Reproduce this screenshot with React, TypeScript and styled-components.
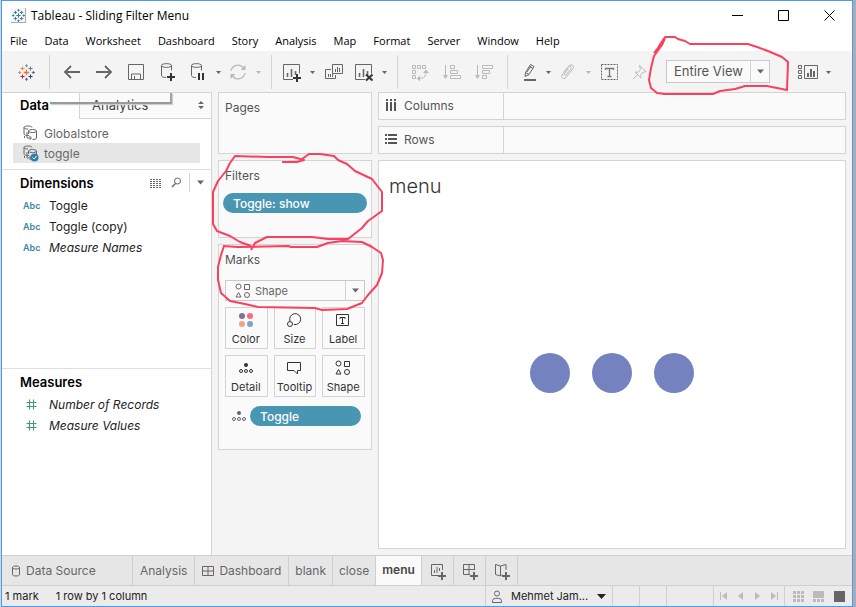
import React from "react";
import styled, { createGlobalStyle, css } from "styled-components";

const LINE = "#d4d4d4";
const UI = '"Open Sans", "Noto Sans", sans-serif';
const BODY = 'Inter, Roboto, "Liberation Sans", sans-serif';

const GlobalStyle = createGlobalStyle`
  *, *::before, *::after { box-sizing: border-box; }
  body { margin: 0; font-family: ${BODY}; font-size: 12px; color: #333; }
  button, select { font: inherit; color: inherit; background: none; border: 0; padding: 0; margin: 0; }
  h1, h2, ul, p { margin: 0; padding: 0; }
  ul { list-style: none; }
  svg { display: block; flex: none; }
`;

/* ---------- window frame ---------- */

const Desktop = styled.div`
  min-height: 100vh;
  display: flex;
  position: relative;
  padding: 0 3px 0 1px;
  background: linear-gradient(90deg, #d3d6da 0 50%, #a9adb3 50%);
`;

const AppWindow = styled.div`
  flex: 1;
  min-width: 0;
  display: flex;
  flex-direction: column;
  border: 1px solid #4a9bee;
  background: #f4f4f4;
`;

const TitleBar = styled.header`
  display: flex;
  align-items: center;
  height: 29px;
  padding-left: 9px;
  background: #fff;
  color: #000;
`;

const AppBadge = styled.span`
  display: grid;
  place-items: center;
  width: 15px;
  height: 15px;
  border-right: 1px solid #aaa;
  border-bottom: 1px solid #aaa;
  background: #f4f6f8;
`;

const WindowTitle = styled.h1`
  flex: 1;
  margin-left: 5px;
  font: 400 12px/16px ${UI};
`;

const WindowButton = styled.button`
  display: grid;
  place-items: center;
  width: 46px;
  height: 28px;
`;

const MenuBar = styled.nav`
  display: flex;
  align-items: center;
  gap: 17px;
  height: 21px;
  padding-left: 8px;
  background: #fff;
  color: #000;
`;

const MenuItem = styled.button`
  font: 400 11px/20px ${UI};
`;

/* ---------- toolbar ---------- */

const Toolbar = styled.div`
  display: flex;
  height: 41px;
  padding: 4px 0 0 2px;
`;

const Group = styled.div<{ $last?: boolean }>`
  display: flex;
  align-items: center;
  height: 34px;
  padding: 0 7px 0 6px;
  border-right: ${(p) => (p.$last ? "0" : `1px solid ${LINE}`)};
`;

const Tool = styled.button<{ $narrow?: boolean; $off?: boolean }>`
  display: grid;
  place-items: center;
  width: ${(p) => (p.$narrow ? 28 : 32)}px;
  height: 28px;
  color: ${(p) => (p.$off ? "#b9b9b9" : "#666")};
`;

const CaretTool = styled.button<{ $off?: boolean }>`
  display: grid;
  place-items: center;
  width: 12px;
  height: 28px;
  color: ${(p) => (p.$off ? "#b9b9b9" : "#666")};
`;

const SelectBox = styled.label<{ $wide?: boolean }>`
  display: grid;
  grid-template-columns: 1fr 19px;
  align-items: center;
  border: 1px solid #c9c9c9;
  background: #fafafa;
  color: ${(p) => (p.$wide ? "#666" : "#555")};
  ${(p) =>
    p.$wide
      ? css`height: 21px; font-size: 11px;`
      : css`width: 104px; height: 23px; margin: 0 24px 2px 12px; font-size: 13px;`}
`;

const SelectInput = styled.select<{ $indent: number }>`
  appearance: none;
  grid-area: 1 / 1 / 2 / 3;
  width: 100%;
  height: 19px;
  padding-left: ${(p) => p.$indent}px;
  outline: 0;
`;

const SelectGlyph = styled.span`
  grid-area: 1 / 1;
  padding-left: 9px;
  color: #666;
  pointer-events: none;
`;

const SelectArrow = styled.span`
  grid-area: 1 / 2;
  display: grid;
  place-items: center;
  height: 100%;
  border-left: 1px solid ${LINE};
  color: #666;
  pointer-events: none;
`;

/* ---------- work area ---------- */

const Work = styled.div`
  flex: 1;
  display: grid;
  grid-template-columns: 210px 154px minmax(0, 1fr);
`;

const DataPane = styled.aside`
  display: flex;
  flex-direction: column;
  position: relative;
  border: solid ${LINE};
  border-width: 1px 1px 0 0;
  background: #fff;
`;

const PaneTabs = styled.div`
  display: flex;
  height: 26px;
`;

const PaneTab = styled.button<{ $active?: boolean }>`
  display: flex;
  align-items: center;
  justify-content: space-between;
  text-align: left;
  font-size: 13px;
  line-height: 18px;
  ${(p) =>
    p.$active
      ? css`width: 77px; padding: 0 0 2px 18px; font-weight: 600; color: #000;`
      : css`
          flex: 1;
          padding: 0 7px 1px 12px;
          background: #fafafa;
          border: solid ${LINE};
          border-width: 0 0 1px 1px;
          color: #444;
        `}
`;

const PopupEdge = styled.div`
  position: absolute;
  top: 0;
  left: 48px;
  width: 122px;
  height: 11px;
  border-right: 2px solid #a2a2a2;
  border-bottom: 2px solid #9a9a9a;
  box-shadow: 1px 1px 1px #d0d0d0;
  pointer-events: none;
`;

const SourceList = styled.ul`
  padding: 4px 11px 6px;
  border-bottom: 1px solid #e0e0e0;
`;

const Source = styled.li<{ $active?: boolean }>`
  background: ${(p) => (p.$active ? "#e6e6e6" : "transparent")};
`;

const SourceButton = styled.button`
  display: flex;
  align-items: center;
  gap: 5px;
  width: 100%;
  height: 20px;
  padding-left: 9px;
  color: #666;
`;

const FieldSection = styled.section<{ $grow: number }>`
  flex: ${(p) => p.$grow} 0 0;
  & + & {
    border-top: 1px solid #e0e0e0;
  }
`;

const SectionHead = styled.div`
  display: flex;
  align-items: center;
  height: 25px;
  padding-left: 18px;
`;

const SectionTitle = styled.h2`
  flex: 1;
  font-size: 13px;
  line-height: 18px;
  font-weight: 600;
  color: #000;
`;

const HeadButton = styled.button<{ $edge?: boolean }>`
  display: grid;
  place-items: center;
  width: 20px;
  height: 19px;
  color: #666;
  ${(p) => p.$edge && css`width: 22px; margin-left: 3px; border-left: 1px solid ${LINE};`}
`;

const Field = styled.li<{ $italic?: boolean }>`
  display: flex;
  align-items: center;
  height: 21px;
  padding-left: 21px;
  font-style: ${(p) => (p.$italic ? "italic" : "normal")};
  color: #222;
`;

const FieldType = styled.span<{ $measure?: boolean }>`
  display: flex;
  width: 26px;
  padding-left: ${(p) => (p.$measure ? 3 : 0)}px;
  font-size: 9px;
  font-weight: 600;
  font-style: normal;
  color: ${(p) => (p.$measure ? "#3a9c7d" : "#3f87a3")};
`;

const CardColumn = styled.div`
  display: flex;
  flex-direction: column;
  gap: 6px;
  width: 154px;
  margin-left: 6px;
`;

const Card = styled.section<{ $min: number }>`
  min-height: ${(p) => p.$min}px;
  padding: 6px 4px;
  border: 1px solid ${LINE};
  background: #fafafa;
`;

const CardTitle = styled.h2`
  padding-left: 2px;
  font-size: 12px;
  line-height: 18px;
  font-weight: 400;
  color: #555;
`;

const Pill = styled.button<{ $row?: boolean }>`
  height: 20px;
  padding-left: 10px;
  border-radius: 10px;
  background: #4996b2;
  color: #fff;
  font-size: 12px;
  font-weight: 500;
  text-align: left;
  ${(p) => (p.$row ? css`flex: 1;` : css`display: block; width: 100%; margin-top: 8px;`)}
`;

const MarksBody = styled.div`
  display: grid;
  gap: 6px;
  padding: 11px 2px 0;
`;

const MarkGrid = styled.div`
  display: grid;
  grid-template-columns: repeat(3, minmax(0, 1fr));
  gap: 6px;
`;

const MarkButton = styled.button`
  display: flex;
  flex-direction: column;
  align-items: center;
  justify-content: space-between;
  height: 42px;
  padding: 4px 1px 1px 0;
  border: 1px solid ${LINE};
  font-size: 11px;
  line-height: 15px;
  color: #333;
`;

const MarkRow = styled.div`
  display: flex;
  align-items: center;
  gap: 3px;
  margin-top: 3px;
  padding: 0 4px 0 6px;
  color: #666;
`;

const Sheet = styled.main`
  display: flex;
  flex-direction: column;
  gap: 6px;
  padding: 0 6px 6px 12px;
`;

const Shelf = styled.div`
  display: flex;
  height: 28px;
  border: 1px solid ${LINE};
  background: #fafafa;
`;

const ShelfLabel = styled.div`
  display: flex;
  align-items: center;
  gap: 7px;
  width: 125px;
  padding: 0 0 2px 6px;
  border-right: 1px solid ${LINE};
  color: #555;
`;

const Viz = styled.section`
  flex: 1;
  display: flex;
  flex-direction: column;
  border: 1px solid ${LINE};
  background: #fff;
`;

const VizTitle = styled.h2`
  height: 36px;
  padding: 13px 10px 0;
  font-size: 20px;
  line-height: 24px;
  font-weight: 300;
  color: #333;
`;

const Dots = styled.div`
  flex: 1;
  display: flex;
  align-items: center;
  justify-content: center;
  gap: 22px;
`;

const Dot = styled.span`
  width: 40px;
  height: 40px;
  border-radius: 50%;
  background: #7483bf;
`;

/* ---------- bottom bars ---------- */

const SheetTabs = styled.nav`
  display: flex;
  height: 31px;
  border: solid #cfcfcf;
  border-width: 1px 0;
  background: #e6e6e6;
`;

const SheetTab = styled.button<{ $kind?: "source" | "roomy" | "active" | "add" }>`
  display: flex;
  align-items: center;
  gap: 5px;
  padding: 0 6px;
  border-right: 1px solid #cfcfcf;
  color: #666;
  ${(p) => p.$kind === "source" && css`width: 131px; padding-left: 9px;`}
  ${(p) => p.$kind === "roomy" && css`padding: 0 7px;`}
  ${(p) => p.$kind === "active" && css`background: #fafafa; color: #444; font-weight: 600; padding-bottom: 2px;`}
  ${(p) => p.$kind === "add" && css`width: 32px; padding: 0 0 0 8px;`}
`;

const StatusBar = styled.footer`
  display: flex;
  height: 20px;
  background: #ebebeb;
  font-size: 11px;
  color: #222;
`;

const StatusText = styled.div`
  flex: 1;
  display: flex;
  align-items: center;
  gap: 17px;
  padding-left: 3px;
`;

const StatusCell = styled.div<{ $w: number }>`
  display: flex;
  align-items: center;
  justify-content: space-evenly;
  width: ${(p) => p.$w}px;
  border-left: 1px solid #cfcfcf;
  color: #bbb;
`;

const UserButton = styled.button`
  display: flex;
  align-items: center;
  gap: 8px;
  width: 127px;
  padding: 0 6px 0 5px;
  border-left: 1px solid #cfcfcf;
`;

const UserGlyph = styled.span`
  color: #666;
`;

const UserName = styled.span`
  flex: 1;
  text-align: left;
  white-space: nowrap;
`;

const Nav = styled.button`
  display: grid;
  place-items: center;
  width: 15px;
  height: 18px;
`;

const Ink = styled.svg`
  position: absolute;
  top: 0;
  left: 0;
  pointer-events: none;
`;

/* ---------- icons ---------- */

type IconProps = { w?: number; h?: number; children: React.ReactNode };
const Icon = ({ w = 20, h = 20, children }: IconProps) => (
  <svg width={w} height={h} viewBox={`0 0 ${w} ${h}`} fill="none" stroke="currentColor" aria-hidden="true">
    {children}
  </svg>
);

const Caret = ({ big }: { big?: boolean }) => (
  <Icon w={9} h={5}>
    <path d={big ? "M0 0h9L4.500 5z" : "M2 1h5L4.500 4z"} fill="currentColor" stroke="none" />
  </Icon>
);

const SelectCaret = () => (
  <Icon w={9} h={5}>
    <path d="M1 0.500h7L4.500 4.500z" fill="currentColor" stroke="none" />
  </Icon>
);

const plus = (x: number, y: number, r: number) => `M${x - r} ${y}h${2 * r}M${x} ${y - r}v${2 * r}`;

const TableauLogo = ({ mono }: { mono?: boolean }) => {
  const c = (v: string) => (mono ? "#3b7c9e" : v);
  const s = mono ? 13 : 17;
  return (
    <svg width={s} height={s} viewBox="0 0 17 17" fill="none" strokeWidth={mono ? 1.3 : 1.1} aria-hidden="true">
      <path d={plus(8.5, 8.5, 2.8)} stroke={c("#e8762d")} strokeWidth="1.400" />
      <path d={plus(4.5, 4.5, 2.1)} stroke={c("#eb912c")} />
      <path d={plus(12.5, 4.5, 2.1)} stroke={c("#59879b")} />
      <path d={plus(4.5, 12.5, 2.1)} stroke={c("#c72037")} />
      <path d={plus(12.5, 12.5, 2.1)} stroke={c("#1f447e")} />
      <path d={plus(8.5, 1.7, 1.5)} stroke={c("#7199a6")} />
      <path d={plus(8.5, 15.3, 1.5)} stroke={c("#5c6692")} />
      <path d={plus(1.7, 8.5, 1.5)} stroke={c("#c98a86")} />
      <path d={plus(15.3, 8.5, 1.5)} stroke={c("#5c6692")} />
    </svg>
  );
};

const Cylinder = "M3.500 3.500c0-2.500 10-2.500 10 0s-10 2.500-10 0v10";
const AddSource = () => (
  <Icon>
    <path d={`${Cylinder}c0 1.500 2 2 4.500 2M13.500 3.500v5`} />
    <path d="M9 15h8M13 11v8" stroke="#333" strokeWidth="2" />
  </Icon>
);
const PauseSource = () => (
  <Icon>
    <path d={`${Cylinder}c0 1.500 2 2 4.500 2M13.500 3.500v5`} />
    <path d="M11 11v7M15 11v7" stroke="#333" strokeWidth="2" />
  </Icon>
);
const Arrow = ({ right }: { right?: boolean }) => (
  <Icon>
    <path d={right ? "M2 10h15M11 4l6 6-6 6" : "M18 10H3M9 4l-6 6 6 6"} strokeWidth="1.800" />
  </Icon>
);
const Save = () => (
  <Icon>
    <path d="M2.500 2.500h15v15h-15zM5.500 17v-5h9v5M8.500 17v-3" />
  </Icon>
);
const Refresh = () => (
  <Icon>
    <path d="M3 9a7 7 0 0 1 12.500-3M17 11a7 7 0 0 1-12.500 3" strokeWidth="1.300" />
    <path d="M17.500 3v5h-5zM2.500 17v-5h5z" fill="currentColor" stroke="none" />
  </Icon>
);
const SheetIcon = ({ mark }: { mark: "plus" | "cross" }) => (
  <Icon>
    <path d="M11 17.500H1.500v-15h16v9" />
    <path d="M5.500 11v4M9.500 7v8M13.500 9v4" strokeWidth="1.600" />
    <path d={mark === "plus" ? "M11 16h8M15 12v8" : "M12 12.500l6.500 6M18.500 12.500l-6.500 6"} stroke="#333" strokeWidth="2" />
  </Icon>
);
const Duplicate = () => (
  <Icon>
    <path d="M8.500 2.500h10v9h-10zM7 7.500H1.500v9h10V13M11.500 7v3M13.500 5v5M15.500 6v4M4.500 12v3M6.500 12v3M8.500 12v3" />
  </Icon>
);
const Swap = () => (
  <Icon>
    <path d="M2.500 3.500h3v3h-3zM7.500 3.500h3v3h-3zM12.500 3.500h3v3h-3zM2.500 8.500h3v3h-3zM2.500 13.500h3v3h-3zM9 16.500c5 0 7-2 7-7" />
    <path d="M13 11l3-3.500 3 3.500zM10 13.500v6L7 16.500z" fill="currentColor" stroke="none" />
  </Icon>
);
const Sort = ({ desc }: { desc?: boolean }) => (
  <Icon>
    <path d="M3.500 3v11" />
    <path d="M1 13h5l-2.500 4z" fill="currentColor" stroke="none" />
    <path
      d={desc ? "M8.500 3.500h10v3h-10zM8.500 8.500h7v3h-7zM8.500 13.500h4v3h-4z" : "M8.500 3.500h4v3h-4zM8.500 8.500h7v3h-7zM8.500 13.500h10v3h-10z"}
    />
  </Icon>
);
const Pen = () => (
  <Icon>
    <path d="M7.500 10.500l5-8 3.500 2-5 8-4 2zM7.500 10.500l3.500 2M11.500 4.500l3.500 2M9 10l4-6" />
    <path d="M6 18h12" strokeWidth="2" />
  </Icon>
);
const Clip = () => (
  <Icon>
    <path d="M6 10l5-6c2-2.500 6-.5 4 2.500l-7 9c-2 2.500-5.500.5-4-2.500l6-8c1.500-2 4-.5 3 1.500l-5 6.500c-1 1-2.500 0-1.500-1.500l4-5" />
  </Icon>
);
const TextTool = () => (
  <Icon>
    <rect x="1.500" y="2.500" width="16" height="15" strokeDasharray="2 1" />
    <path d="M5.500 8V6.500h8V8M9.500 6.500v8M7.500 14.500h4" stroke="#777" strokeWidth="1.300" />
  </Icon>
);
const Pin = () => (
  <Icon>
    <path d="M9.500 3.500l6.500 6-1.500.5-2 .5-2 3 .5 2.500L5 10l3 .3 2.500-2.800zM7.500 13L3 17" />
  </Icon>
);
const ShowMe = () => (
  <Icon w={22} h={16}>
    <path d="M1.500 1.500h3v3h-3zM1.500 6.500h3v3h-3zM1.500 11.500h3v3h-3zM7.500 1.500h13v13h-13z" />
    <path d="M11 9v4M14 5v8M17 7v6" strokeWidth="2" />
  </Icon>
);
const SourceIcon = ({ checked }: { checked?: boolean }) => (
  <Icon w={17} h={18}>
    <path d="M7 11.500c-3 0-5-.5-5-1.500V3.500c0-2 8-2 8 0M2 3.500c0 1 2 1.500 4 1.500M2.500 12v2M5 8v6h4M7.500 12l2 2-2 2" />
    <path d="M6.500 7c0-2 8-2 8 0s-8 2-8 0v3M14.500 7v7c0 1-2 1.500-4 1.500" />
    {checked && (
      <>
        <circle cx="12.500" cy="13.500" r="4" fill="#2f7fa5" stroke="none" />
        <path d="M10.500 13.500l1.500 1.500 2.500-3" stroke="#fff" />
      </>
    )}
  </Icon>
);
const ShapeIcon = () => (
  <Icon w={16} h={16}>
    <circle cx="3.500" cy="3.500" r="2.500" />
    <path d="M9.500 1.500h5v5h-5zM3.500 9.500L1 14h5z" />
    <circle cx="12" cy="12" r="2.500" />
  </Icon>
);
const DetailIcon = () => (
  <Icon w={16} h={16}>
    <circle cx="8" cy="5" r="2" fill="currentColor" stroke="none" />
    <circle cx="3" cy="11" r="1.500" />
    <circle cx="8" cy="11" r="1.500" />
    <circle cx="13" cy="11" r="1.500" />
  </Icon>
);
const markIcons: Record<string, React.ReactNode> = {
  Color: (
    <svg width="16" height="16" viewBox="0 0 16 16" aria-hidden="true">
      <circle cx="4" cy="4" r="3" fill="#83709b" />
      <circle cx="12" cy="4" r="3" fill="#f96d7e" />
      <circle cx="4" cy="12" r="3" fill="#f0a57a" />
      <circle cx="12" cy="12" r="3" fill="#7ea3cb" />
    </svg>
  ),
  Size: (
    <Icon w={16} h={16}>
      <path d="M4 9a5.500 5.500 0 1 1 4 3.500" />
      <circle cx="4" cy="12" r="2.500" />
    </Icon>
  ),
  Label: (
    <Icon w={16} h={16}>
      <path d="M1.500 2.500h12v11h-12zM5 7V5.500h5V7M7.500 5.500v6M6 11.500h3" />
    </Icon>
  ),
  Detail: <DetailIcon />,
  Tooltip: (
    <Icon w={16} h={16}>
      <path d="M1.500 2.500h13v8h-3v3.500L8 10.500H1.500z" />
    </Icon>
  ),
  Shape: <ShapeIcon />,
};
const Hash = () => (
  <Icon w={11} h={11}>
    <path d="M3.500 0.500v10M7.500 0.500v10M0.500 3.500h10M0.500 7.500h10" />
  </Icon>
);
const AddTab = ({ d }: { d: string }) => (
  <Icon w={18} h={18}>
    <path d={d} />
    <path d="M8 14h8M12 10v8" strokeWidth="2" />
  </Icon>
);

const menus = ["File", "Data", "Worksheet", "Dashboard", "Story", "Analysis", "Map", "Format", "Server", "Window", "Help"];

const inkPaths = [
  "M665 38L662 45 654 56 651 68 649 80 651 88 657 93 665 94H713L720 91 735 89 745 86H767L787 90 788 62 782 57 768 51 757 47 748 44H690L685 41 678 39 675 37H665L659 46 661 44 654 53",
  "M282 162H297L304 160 293 157 268 157 235 156 230 163 226 171 218 181 213 192V224L217 231 230 236 240 242 251 246M251 250L255 243 267 237H312L328 239 348 239 362 228 368 221 382 211V192L372 179 355 171 347 164 338 160 334 156 320 154H309L302 159",
  "M223 246L238 247 288 246 291 247 317 247 328 243 342 241 362 242 372 247 381 253 383 260 382 273 377 285 368 295 362 303 347 309 322 310 315 308 258 307 245 304 230 301 221 293 218 280 218 267 221 255 224 246",
];

export default function App() {
  return (
    <Desktop>
      <GlobalStyle />
      <AppWindow>
        <TitleBar>
          <AppBadge><TableauLogo mono /></AppBadge>
          <WindowTitle>Tableau - Sliding Filter Menu</WindowTitle>
          <WindowButton aria-label="Minimize"><Icon w={11} h={11}><path d="M0 5.500h11" /></Icon></WindowButton>
          <WindowButton aria-label="Maximize"><Icon w={11} h={11}><path d="M.5.5h10v10H.5z" /></Icon></WindowButton>
          <WindowButton aria-label="Close"><Icon w={11} h={11}><path d="M.5.5l10 10M10.500.5l-10 10" /></Icon></WindowButton>
        </TitleBar>
        <MenuBar>{menus.map((m) => <MenuItem key={m}>{m}</MenuItem>)}</MenuBar>

        <Toolbar>
          <Group><Tool aria-label="Start page"><TableauLogo /></Tool></Group>
          <Group>
            <Tool aria-label="Undo"><Arrow /></Tool>
            <Tool aria-label="Redo"><Arrow right /></Tool>
            <Tool aria-label="Save"><Save /></Tool>
            <Tool aria-label="New data source"><AddSource /></Tool>
            <Tool $narrow aria-label="Pause updates"><PauseSource /></Tool>
            <CaretTool aria-label="Pause options"><Caret /></CaretTool>
            <Tool $narrow $off aria-label="Run update"><Refresh /></Tool>
            <CaretTool $off aria-label="Update options"><Caret /></CaretTool>
          </Group>
          <Group>
            <Tool $narrow aria-label="New worksheet"><SheetIcon mark="plus" /></Tool>
            <CaretTool aria-label="New sheet options"><Caret /></CaretTool>
            <Tool aria-label="Duplicate"><Duplicate /></Tool>
            <Tool $narrow aria-label="Clear sheet"><SheetIcon mark="cross" /></Tool>
            <CaretTool aria-label="Clear options"><Caret /></CaretTool>
          </Group>
          <Group>
            <Tool $off aria-label="Swap rows and columns"><Swap /></Tool>
            <Tool $off aria-label="Sort ascending"><Sort /></Tool>
            <Tool $off aria-label="Sort descending"><Sort desc /></Tool>
          </Group>
          <Group $last>
            <Tool $narrow aria-label="Highlight"><Pen /></Tool>
            <CaretTool aria-label="Highlight options"><Caret /></CaretTool>
            <Tool $narrow $off aria-label="Group members"><Clip /></Tool>
            <CaretTool $off aria-label="Group options"><Caret /></CaretTool>
            <Tool aria-label="Show mark labels"><TextTool /></Tool>
            <Tool $narrow $off aria-label="Fix axes"><Pin /></Tool>
            <SelectBox>
              <SelectInput $indent={7} aria-label="Fit" defaultValue="Entire View">
                <option>Entire View</option>
              </SelectInput>
              <SelectArrow><SelectCaret /></SelectArrow>
            </SelectBox>
            <Tool $narrow aria-label="Show Me"><ShowMe /></Tool>
            <CaretTool aria-label="Show Me options"><Caret /></CaretTool>
          </Group>
        </Toolbar>

        <Work>
          <DataPane>
            <PaneTabs>
              <PaneTab $active>Data</PaneTab>
              <PaneTab>
                Analytics
                <Icon w={6} h={8}><path d="M0 3h6L3 0zM0 5h6L3 8z" fill="#666" stroke="none" /></Icon>
              </PaneTab>
            </PaneTabs>
            <PopupEdge />
            <SourceList>
              <Source><SourceButton><SourceIcon />Globalstore</SourceButton></Source>
              <Source $active><SourceButton><SourceIcon checked />toggle</SourceButton></Source>
            </SourceList>
            <FieldSection $grow={199}>
              <SectionHead>
                <SectionTitle>Dimensions</SectionTitle>
                <HeadButton aria-label="View data">
                  <Icon w={12} h={10}><path d="M0 1.500h12M0 3.500h12M0 5.500h12M0 7.500h12M0 9.500h12" strokeDasharray="2 1" /></Icon>
                </HeadButton>
                <HeadButton aria-label="Find field">
                  <Icon w={11} h={11}><circle cx="6.500" cy="4" r="3" /><path d="M4.500 6.500L1 10" strokeWidth="1.500" /></Icon>
                </HeadButton>
                <HeadButton $edge aria-label="Pane menu"><SelectCaret /></HeadButton>
              </SectionHead>
              <ul>
                <Field><FieldType>Abc</FieldType>Toggle</Field>
                <Field><FieldType>Abc</FieldType>Toggle (copy)</Field>
                <Field $italic><FieldType>Abc</FieldType>Measure Names</Field>
              </ul>
            </FieldSection>
            <FieldSection $grow={186}>
              <SectionHead><SectionTitle>Measures</SectionTitle></SectionHead>
              <ul>
                <Field $italic><FieldType $measure><Hash /></FieldType>Number of Records</Field>
                <Field $italic><FieldType $measure><Hash /></FieldType>Measure Values</Field>
              </ul>
            </FieldSection>
          </DataPane>

          <CardColumn>
            <Card $min={62}><CardTitle>Pages</CardTitle></Card>
            <Card $min={78}>
              <CardTitle>Filters</CardTitle>
              <Pill>Toggle: show</Pill>
            </Card>
            <Card $min={206}>
              <CardTitle>Marks</CardTitle>
              <MarksBody>
                <SelectBox $wide>
                  <SelectGlyph><ShapeIcon /></SelectGlyph>
                  <SelectInput $indent={29} aria-label="Mark type" defaultValue="Shape">
                    <option>Shape</option>
                  </SelectInput>
                  <SelectArrow><SelectCaret /></SelectArrow>
                </SelectBox>
                <MarkGrid>
                  {Object.keys(markIcons).map((name) => (
                    <MarkButton key={name}>{markIcons[name]}{name}</MarkButton>
                  ))}
                </MarkGrid>
                <MarkRow><DetailIcon /><Pill $row>Toggle</Pill></MarkRow>
              </MarksBody>
            </Card>
          </CardColumn>

          <Sheet>
            <Shelf>
              <ShelfLabel>
                <Icon w={12} h={12}><path d="M2 0v2M2 3v9M6 0v2M6 3v9M10 0v2M10 3v9" strokeWidth="2" /></Icon>
                Columns
              </ShelfLabel>
            </Shelf>
            <Shelf>
              <ShelfLabel>
                <Icon w={12} h={12}><path d="M0 2h2M3 2h9M0 6h2M3 6h9M0 10h2M3 10h9" strokeWidth="2" /></Icon>
                Rows
              </ShelfLabel>
            </Shelf>
            <Viz>
              <VizTitle>menu</VizTitle>
              <Dots><Dot /><Dot /><Dot /></Dots>
            </Viz>
          </Sheet>
        </Work>

        <SheetTabs>
          <SheetTab $kind="source">
            <Icon w={10} h={12}><path d="M1.500 2.500c0-2 7-2 7 0s-7 2-7 0v7c0 2 7 2 7 0v-7" /></Icon>
            Data Source
          </SheetTab>
          <SheetTab $kind="roomy">Analysis</SheetTab>
          <SheetTab $kind="roomy">
            <Icon w={12} h={12}><path d="M.5 1.500h11v9H.5zM6 1.500v9M.5 6h11" /></Icon>
            Dashboard
          </SheetTab>
          <SheetTab>blank</SheetTab>
          <SheetTab>close</SheetTab>
          <SheetTab $kind="active">menu</SheetTab>
          <SheetTab $kind="add" aria-label="New worksheet"><AddTab d="M8 13.500H1.500v-11h11V8M4.500 8v3M7 5v6M9.500 6v3" /></SheetTab>
          <SheetTab $kind="add" aria-label="New dashboard"><AddTab d="M8 12.500H1.500v-10h11V8M7 2.500v10M1.500 7.500h11" /></SheetTab>
          <SheetTab $kind="add" aria-label="New story"><AddTab d="M8 12.500L6.500 14l-5-1.500v-10l5 1.500 5.500-1.500V8M6.500 4v10" /></SheetTab>
        </SheetTabs>
        <StatusBar>
          <StatusText><span>1 mark</span><span>1 row by 1 column</span></StatusText>
          <UserButton>
            <UserGlyph>
              <Icon w={12} h={13}><circle cx="6" cy="3.500" r="2.500" /><path d="M1.500 12.500v-2c0-3 9-3 9 0v2z" /></Icon>
            </UserGlyph>
            <UserName>Mehmet Jam...</UserName>
            <Caret big />
          </UserButton>
          <StatusCell $w={27} />
          <StatusCell $w={27} />
          <StatusCell $w={47} />
          <StatusCell $w={71}>
            <Nav aria-label="First"><Icon w={7} h={8}><path d="M.5 0v8" /><path d="M7 0v8L2 4z" fill="currentColor" stroke="none" /></Icon></Nav>
            <Nav aria-label="Previous"><Icon w={5} h={8}><path d="M5 0v8L0 4z" fill="currentColor" stroke="none" /></Icon></Nav>
            <Nav aria-label="Next"><Icon w={5} h={8}><path d="M0 0v8l5-4z" fill="currentColor" stroke="none" /></Icon></Nav>
            <Nav aria-label="Last"><Icon w={7} h={8}><path d="M6.500 0v8" /><path d="M0 0v8l5-4z" fill="currentColor" stroke="none" /></Icon></Nav>
          </StatusCell>
          <StatusCell $w={68}>
            <Nav aria-label="Sheet sorter"><Icon w={11} h={11}><path d="M0 1.500h11M0 5.500h11M0 9.500h11" strokeWidth="3" strokeDasharray="3 1" /></Icon></Nav>
            <Nav aria-label="Filmstrip"><Icon w={11} h={11}><path d="M0 3.500h11" strokeWidth="7" /><path d="M0 9.500h11" strokeWidth="3" strokeDasharray="3 1" /></Icon></Nav>
            <Nav aria-label="Tabs"><Icon w={11} h={11}><path d="M0 0h11v11H0z" fill="#666" stroke="none" /></Icon></Nav>
          </StatusCell>
        </StatusBar>
      </AppWindow>
      <Ink width="856" height="607" viewBox="0 0 856 607" fill="none" stroke="#f9405f" strokeWidth="2" strokeLinejoin="round" aria-hidden="true">
        {inkPaths.map((d) => <path key={d} d={d} />)}
      </Ink>
    </Desktop>
  );
}
